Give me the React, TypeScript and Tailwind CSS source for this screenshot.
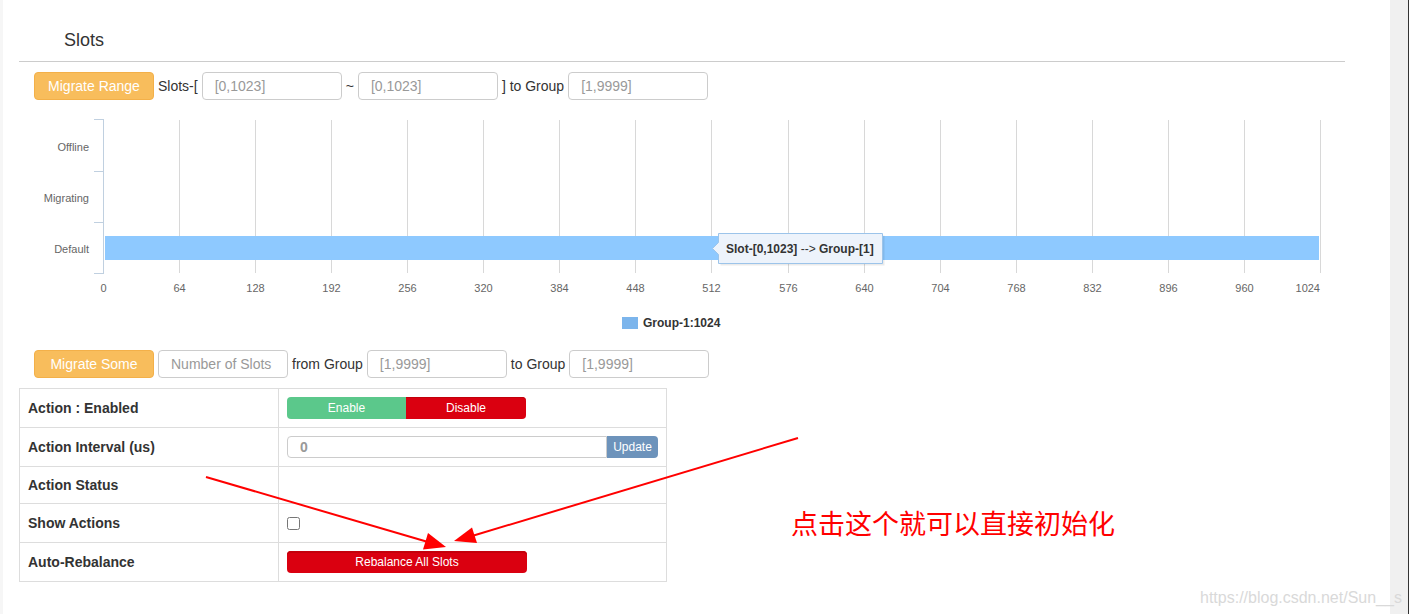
const font = { fontFamily: '"Liberation Sans", Arial, sans-serif' };

const ticks = [0, 64, 128, 192, 256, 320, 384, 448, 512, 576, 640, 704, 768, 832, 896, 960, 1024];
const categories = [
  { name: "Offline", y: 51 },
  { name: "Migrating", y: 102 },
  { name: "Default", y: 153 },
];

const gridX = (i: number) => Math.round(84 + i * 76.06) + 0.5;

const SlotsChart = () => (
  <div className="h-[250px] w-[1326px]">
    <svg width="1326" height="250" style={font}>
      {/* grid lines */}
      {ticks.map((t, i) =>
        i === 0 ? null : (
          <line key={t} x1={gridX(i)} x2={gridX(i)} y1={20} y2={173} stroke="#d8d8d8" strokeWidth={1} />
        )
      )}
      {/* y axis */}
      <line x1={84.5} x2={84.5} y1={19} y2={174} stroke="#c0d0e0" strokeWidth={1} />
      {[19.5, 71.5, 122.5, 173.5].map((y) => (
        <line key={y} x1={75} x2={85} y1={y} y2={y} stroke="#c0d0e0" strokeWidth={1} />
      ))}
      {categories.map((c) => (
        <text key={c.name} x={70} y={c.y} textAnchor="end" fontSize={11} fill="#666">
          {c.name}
        </text>
      ))}
      {/* bar */}
      <rect x={86} y={136} width={1214} height={24} fill="#8ec9ff" />
      {/* x labels */}
      {ticks.map((t, i) => (
        <text
          key={t}
          x={i === ticks.length - 1 ? 1301 : gridX(i)}
          y={192}
          textAnchor={i === ticks.length - 1 ? "end" : "middle"}
          fontSize={11}
          fill="#666"
        >
          {t}
        </text>
      ))}
      {/* tooltip */}
      <path
        d="M701.5 135.5 H865.5 V165.5 H701.5 V156.5 L695.5 150.5 L701.5 144.5 Z"
        fill="#000"
        opacity={0.08}
      />
      <path
        d="M699.5 133.5 H863.5 V163.5 H699.5 V154.5 L693.5 148.5 L699.5 142.5 Z"
        fill="#edf3fb"
        stroke="#9cc4ea"
        strokeWidth={1}
      />
      <text x={707} y={153} fontSize={12} fill="#333">
        <tspan fontWeight="bold">Slot-[0,1023]</tspan>
        <tspan> --&gt; </tspan>
        <tspan fontWeight="bold">Group-[1]</tspan>
      </text>
      {/* legend */}
      <rect x={603} y={217} width={16} height={12} fill="#7cb5ec" />
      <text x={624} y={227} fontSize={12} fontWeight="bold" fill="#333">
        Group-1:1024
      </text>
    </svg>
  </div>
);

const Field = ({ placeholder, width }: { placeholder: string; width: string }) => (
  <input
    placeholder={placeholder}
    className={`${width} h-[28px] rounded-[4px] border border-[#ccc] bg-white px-3 text-[14px] text-[#555] placeholder:text-[#999] outline-none`}
    style={font}
  />
);

const WarnButton = ({ label }: { label: string }) => (
  <button className="h-[28px] w-[120px] rounded-[4px] border border-[#f3b049] bg-[#f8bd5c] text-[14px] text-white">
    {label}
  </button>
);

const Row = ({ label, h, first, children }: { label: string; h: string; first?: boolean; children?: React.ReactNode }) => (
  <div className={`flex ${h} ${first ? "" : "border-t border-[#ddd]"}`}>
    <div className="flex w-[259px] items-center border-r border-[#ddd] pl-2 text-[14px] font-bold text-[#333]">
      {label}
    </div>
    <div className="flex flex-1 items-center pl-2">{children}</div>
  </div>
);

export default function App() {
  return (
    <div className="relative flex h-[614px] w-full overflow-hidden bg-white" style={font}>
      {/* main page */}
      <div className="flex-1 border-l-[3px] border-[#f6f6f6] pl-4 text-[#333]">
        <div className="w-[1326px] border-b border-[#ccc] pt-[28px] pb-[9px] pl-[45px] text-[18px] leading-[24px]">
          Slots
        </div>

        <div className="mt-[10px] flex h-[28px] items-center gap-1 pl-[15px] text-[14px]">
          <WarnButton label="Migrate Range" />
          <span>Slots-[</span>
          <Field placeholder="[0,1023]" width="w-[140px]" />
          <span>~</span>
          <Field placeholder="[0,1023]" width="w-[140px]" />
          <span>] to Group</span>
          <Field placeholder="[1,9999]" width="w-[140px]" />
        </div>

        <SlotsChart />

        <div className="flex h-[28px] items-center gap-1 pl-[15px] text-[14px]">
          <WarnButton label="Migrate Some" />
          <Field placeholder="Number of Slots" width="w-[130px]" />
          <span>from Group</span>
          <Field placeholder="[1,9999]" width="w-[140px]" />
          <span>to Group</span>
          <Field placeholder="[1,9999]" width="w-[140px]" />
        </div>

        {/* action table */}
        <div className="mt-[10px] w-[648px] border border-[#ddd]">
          <Row label="Action : Enabled" h="h-[38px]" first>
            <div className="flex h-[22px] text-[12px] text-white">
              <button className="w-[119px] rounded-l-[4px] bg-[#5bc88b]">Enable</button>
              <button className="w-[120px] rounded-r-[4px] bg-[#da0010] shadow-[inset_0_1px_0_#c2000b]">Disable</button>
            </div>
          </Row>
          <Row label="Action Interval (us)" h="h-[39px]">
            <div className="flex h-[22px]">
              <input
                defaultValue="0"
                className="w-[320px] rounded-l-[4px] border border-[#ccc] px-3 text-[14px] font-bold text-[#999] outline-none"
                style={font}
              />
              <button className="w-[51px] rounded-r-[4px] bg-[#6d93bb] text-[12px] text-white">Update</button>
            </div>
          </Row>
          <Row label="Action Status" h="h-[37px]" />
          <Row label="Show Actions" h="h-[39px]">
            <input type="checkbox" className="m-0 h-[13px] w-[13px]" />
          </Row>
          <Row label="Auto-Rebalance" h="h-[39px]">
            <button className="h-[22px] w-[240px] rounded-[4px] bg-[#da0010] text-[12px] text-white shadow-[inset_0_2px_0_#c4000b]">
              Rebalance All Slots
            </button>
          </Row>
        </div>
      </div>

      {/* scrollbar */}
      <div className="w-[19px] border-r border-[#333] bg-[#f0f0f0]" />

      {/* annotation overlay */}
      <svg className="pointer-events-none absolute left-0 top-0" width="1409" height="614">
        <line x1={206} y1={477} x2={428} y2={542} stroke="#ff0000" strokeWidth={2} />
        <polygon points="446,547 423,549.5 428,533" fill="#ff0000" />
        <line x1={798} y1={438} x2={472} y2={536} stroke="#ff0000" strokeWidth={2} />
        <polygon points="454,541 472,527.5 477,543" fill="#ff0000" />
      </svg>
      <div
        className="absolute left-[791px] top-[509px] text-[27px] leading-none text-[#ff0000]"
        style={{ fontFamily: '"Noto Sans CJK SC", sans-serif' }}
      >
        点击这个就可以直接初始化
      </div>
      <div className="absolute left-[1200px] top-[586px] text-[16px] text-[#d9d9d9]">
        https://blog.csdn.net/Sun__s
      </div>
    </div>
  );
}
